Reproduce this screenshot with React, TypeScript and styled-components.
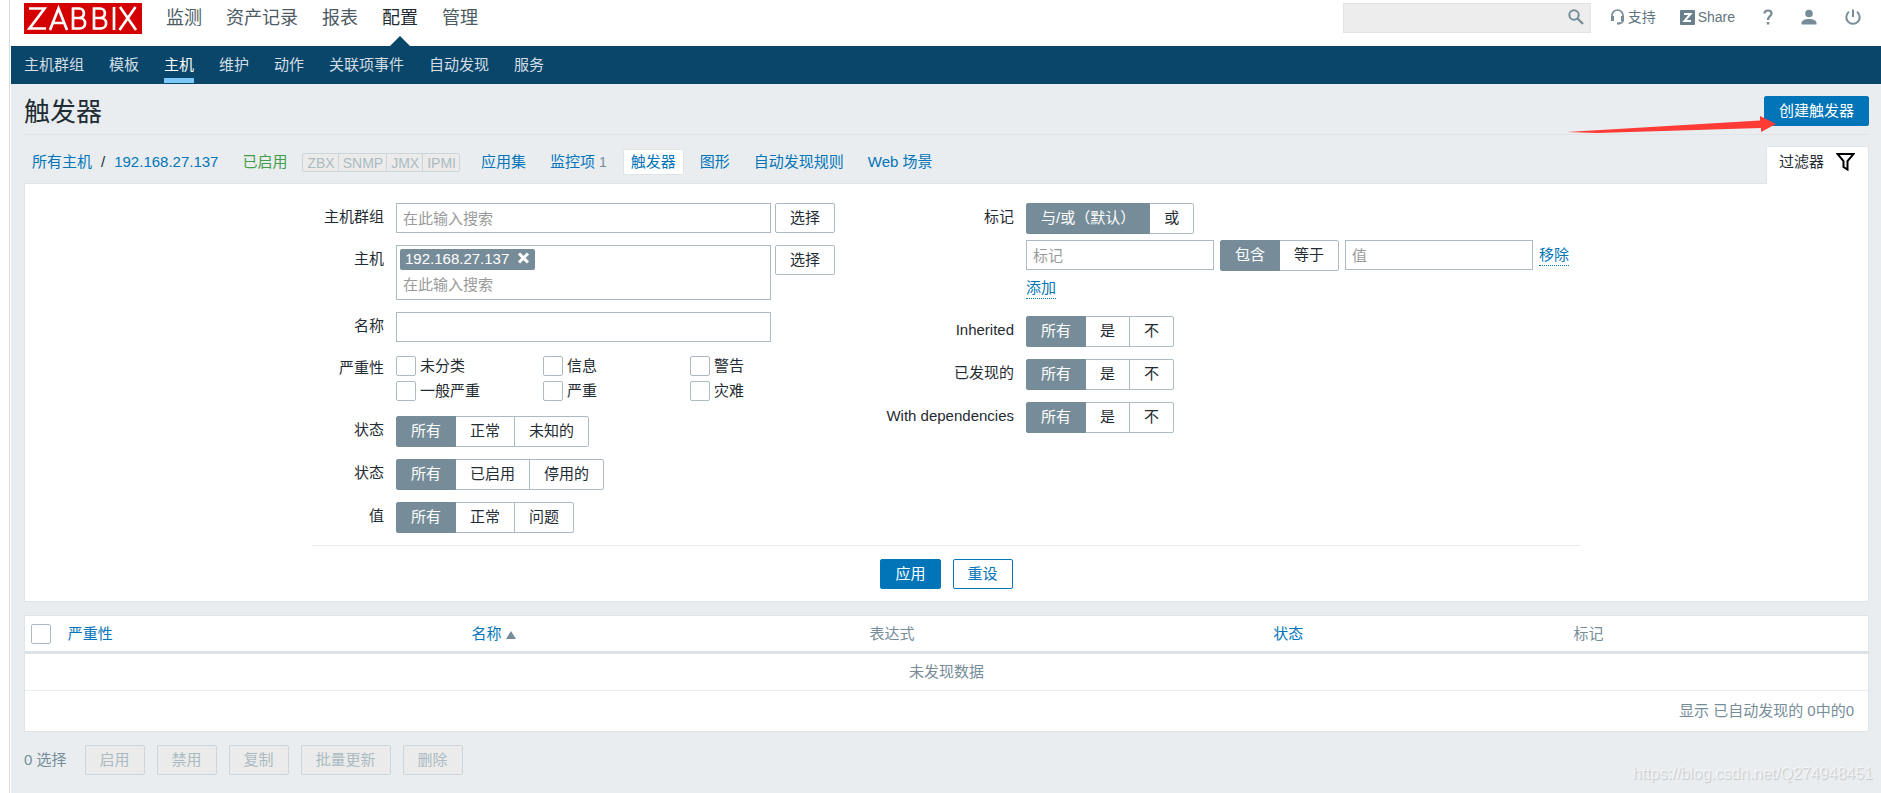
import React from "react";
import styled, { createGlobalStyle, css } from "styled-components";

const Global = createGlobalStyle`
  *, *::before, *::after { box-sizing: border-box; }
  body { margin: 0; background: #fff; }
  body, button, input, table {
    font-family: "Liberation Sans", "Noto Sans CJK SC", sans-serif;
    font-size: 15px;
    line-height: 20px;
    color: #1f2c33;
  }
  a { color: #0275b8; text-decoration: none; }
`;

const Shell = styled.div`
  margin-left: 9px;
  padding-left: 1px;
  border-left: 1px solid #dcdcdc;
`;

const Page = styled.div`
  min-height: 100vh;
  background: #e9edf0;
  position: relative;
  overflow: hidden;
`;

/* Top bar */
const TopBar = styled.header`
  display: flex;
  align-items: flex-start;
  height: 46px;
  padding: 3px 20px 0 13px;
  background: #fff;
`;

const Logo = styled.a`
  flex: none;
  height: 31px;
  svg { display: block; }
`;

const MainNav = styled.nav`
  display: flex;
  gap: 24px;
  margin-left: 24px;
`;

const MainLink = styled.a<{ $active?: boolean }>`
  position: relative;
  height: 43px;
  font-size: 18px;
  line-height: 31px;
  white-space: nowrap;
  color: ${(p) => (p.$active ? "#1f2c33" : "#4c5a63")};
  ${(p) =>
    p.$active &&
    css`
      &::after {
        content: "";
        position: absolute;
        left: 50%;
        bottom: 0;
        margin-left: -10px;
        border: 10px solid transparent;
        border-top-width: 0;
        border-bottom-color: #0a466a;
      }
    `}
`;

const SearchBox = styled.div`
  position: relative;
  margin-left: auto;
  input {
    display: block;
    width: 248px;
    height: 30px;
    padding: 0 34px 0 6px;
    border: 1px solid #dfe4e7;
    background: #ededed;
    outline: 0;
  }
  button {
    position: absolute;
    right: 6px;
    top: 5px;
    padding: 0;
    border: 0;
    background: none;
  }
  svg { display: block; }
`;

const UserNav = styled.nav`
  display: flex;
  align-items: center;
  height: 28px;
  margin-left: 19px;
`;

const UserLink = styled.a<{ $gap: number }>`
  display: flex;
  align-items: center;
  gap: 3px;
  margin-right: ${(p) => p.$gap}px;
  font-size: 14px;
  white-space: nowrap;
  color: #5f7480;
  svg { display: block; }
`;

/* Sub menu */
const SubNav = styled.nav`
  display: flex;
  gap: 25px;
  height: 38px;
  padding: 0 13px;
  background: #0a466a;
`;

const SubLink = styled.a<{ $active?: boolean }>`
  height: 37px;
  line-height: 37px;
  white-space: nowrap;
  color: ${(p) => (p.$active ? "#fff" : "#d3dfe6")};
  border-bottom: 5px solid ${(p) => (p.$active ? "#7cc8f7" : "transparent")};
`;

/* Page heading */
const Content = styled.main`
  padding: 0 12px 18px 13px;
`;

const TitleRow = styled.div`
  display: flex;
  justify-content: space-between;
  align-items: flex-start;
  height: 51px;
  padding-top: 12px;
  border-bottom: 1px solid #dfe4e7;
  h1 {
    margin: 0;
    font-size: 26px;
    line-height: 32px;
    font-weight: 400;
  }
`;

type Kind = "primary" | "outline" | "plain";
const kinds = {
  primary: css`background: #0275b8; border-color: #0275b8; color: #fff;`,
  outline: css`background: #fff; border-color: #0275b8; color: #0275b8;`,
  plain: css`background: #fff; border-color: #acbbc2; color: #1f2c33;`,
};
const Button = styled.button<{ $kind?: Kind }>`
  flex: none;
  height: 30px;
  padding: 0 14px;
  border: 1px solid;
  border-radius: 2px;
  line-height: 26px;
  white-space: nowrap;
  ${(p) => kinds[p.$kind || "plain"]}
  &:disabled {
    background: #ebebeb;
    border-color: #ccd5d9;
    color: #acbbc2;
  }
`;

/* Host tabs */
const HostBar = styled.div`
  display: flex;
  align-items: flex-end;
  justify-content: space-between;
  height: 48px;
`;

const HostNav = styled.div`
  display: flex;
  align-items: center;
  height: 26px;
  margin-bottom: 8px;
  padding-left: 8px;
  white-space: nowrap;
`;

const Slash = styled.span`
  margin: 0 9px;
`;

const HostState = styled.a`
  margin: 0 15px 0 24px;
  color: #429e47;
`;

const Interfaces = styled.div`
  display: flex;
  margin-right: 13px;
  border: 1px solid #ccd5d9;
  border-radius: 2px;
  background: #ebebeb;
  span {
    height: 17px;
    padding: 0 3px 0 4px;
    font-size: 14px;
    line-height: 18px;
    color: #acbbc2;
  }
  span + span { border-left: 1px solid #ccd5d9; }
`;

const HostTab = styled.a<{ $active?: boolean }>`
  height: 26px;
  padding: 0 7px;
  margin-right: 8px;
  line-height: 24px;
  border: 1px solid ${(p) => (p.$active ? "#dfe4e7" : "transparent")};
  border-radius: 2px;
  background: ${(p) => (p.$active ? "#fff" : "transparent")};
  sup {
    margin-left: 4px;
    font-size: 14px;
    line-height: 20px;
    vertical-align: baseline;
    color: #768d99;
  }
`;

const FilterTab = styled.button`
  position: relative;
  z-index: 1;
  display: flex;
  align-items: center;
  gap: 12px;
  height: 38px;
  margin-bottom: -1px;
  padding: 0 13px 8px 12px;
  border: 1px solid #dfe4e7;
  border-bottom: 0;
  border-radius: 2px 2px 0 0;
  background: #fff;
  white-space: nowrap;
`;

/* Filter */
const FilterPanel = styled.form`
  padding: 19px 0 12px;
  border: 1px solid #dfe4e7;
  background: #fff;
`;

const FilterInner = styled.div`
  width: max-content;
  margin: 0 auto;
`;

const FilterColumns = styled.div`
  display: flex;
  gap: 50px;
  padding: 0 12px 12px 0;
  border-bottom: 1px solid #ebebeb;
`;

const FormColumn = styled.div<{ $label: number; $field: number }>`
  display: grid;
  grid-template-columns: ${(p) => p.$label}px ${(p) => p.$field}px;
  column-gap: 12px;
  row-gap: 12px;
  align-content: start;
`;

const FieldLabel = styled.label`
  padding-top: 4px;
  text-align: right;
  white-space: nowrap;
`;

const Field = styled.div`
  display: flex;
  align-items: flex-start;
  gap: 4px;
`;

const TextInput = styled.input<{ $short?: boolean }>`
  flex: none;
  width: ${(p) => (p.$short ? 188 : 375)}px;
  height: 30px;
  padding: 1px 6px 0;
  border: 1px solid #acbbc2;
  outline: 0;
  &::placeholder { color: #9a9a9a; opacity: 1; }
`;

const MultiSelect = styled.div`
  display: flex;
  flex-direction: column;
  align-items: flex-start;
  width: 375px;
  height: 55px;
  padding: 3px;
  border: 1px solid #acbbc2;
  input {
    width: 100%;
    height: 28px;
    padding: 3px 3px 0;
    border: 0;
    outline: 0;
  }
  input::placeholder { color: #9a9a9a; opacity: 1; }
`;

const Token = styled.span`
  display: flex;
  align-items: center;
  gap: 8px;
  height: 22px;
  padding: 0 5px;
  border-radius: 2px;
  background: #768d99;
  color: #fff;
  button {
    padding: 0 0 2px;
    border: 0;
    background: none;
  }
  svg { display: block; }
`;

const CheckGrid = styled.div`
  display: grid;
  grid-template-columns: repeat(3, 147px);
  row-gap: 5px;
  padding: 2px 0 3px;
  label {
    display: flex;
    align-items: center;
    gap: 4px;
    height: 20px;
  }
`;

const Checkbox = styled.input.attrs({ type: "checkbox" })`
  appearance: none;
  flex: none;
  display: block;
  width: 20px;
  height: 20px;
  margin: 0;
  border: 1px solid #acbbc2;
  border-radius: 2px;
  background: #fff;
`;

const SegmentGroup = styled.div`
  display: flex;
  label {
    position: relative;
    height: 31px;
    margin-left: -1px;
    padding: 0 14px;
    border: 1px solid #acbbc2;
    line-height: 27px;
    white-space: nowrap;
  }
  label:first-child { margin-left: 0; border-radius: 2px 0 0 2px; }
  label:last-child { border-radius: 0 2px 2px 0; }
  label:has(input:checked) {
    z-index: 1;
    border-color: #768d99;
    background: #768d99;
    color: #fff;
  }
  input {
    position: absolute;
    opacity: 0;
    margin: 0;
  }
`;

const TagField = styled.div`
  display: flex;
  flex-direction: column;
  align-items: flex-start;
  gap: 6px;
  padding-bottom: 5px;
`;

const TagRow = styled.div`
  display: flex;
  gap: 6px;
`;

const DottedLink = styled.button`
  padding: 0;
  border: 0;
  border-bottom: 1px dotted #0275b8;
  background: none;
  line-height: 21px;
  white-space: nowrap;
  color: #0275b8;
  ${TagRow} & {
    align-self: flex-start;
    margin-top: 4px;
  }
`;

const FilterActions = styled.div`
  display: flex;
  justify-content: center;
  gap: 12px;
  padding-top: 13px;
`;

/* Data table */
const DataTable = styled.table`
  width: 100%;
  margin-top: 13px;
  table-layout: fixed;
  border-collapse: separate;
  border-spacing: 0;
  border: 1px solid #dfe4e7;
  background: #fff;
  color: #768d99;
  th {
    height: 38px;
    padding: 0 6px;
    border-bottom: 3px solid #dce2e5;
    font-weight: 400;
    text-align: left;
  }
  td { height: 37px; padding: 0 6px; }
`;

const EmptyCell = styled.td`
  text-align: center;
  border-bottom: 1px solid #ebeef0;
`;

const TotalCell = styled.td`
  && { height: 40px; padding: 0 14px; }
  text-align: right;
`;

const SortMark = styled.span`
  display: inline-block;
  margin-left: 5px;
  border: 5px solid transparent;
  border-top-width: 0;
  border-bottom: 8px solid #768d99;
`;

const ActionBar = styled.div`
  display: flex;
  align-items: center;
  gap: 12px;
  margin-top: 13px;
  span {
    margin-right: 6px;
    color: #768d99;
  }
`;

const Arrow = styled.svg`
  position: absolute;
  top: 115px;
  right: 104px;
`;

const Watermark = styled.div`
  position: absolute;
  right: 8px;
  bottom: 9px;
  font-size: 16px;
  color: rgba(255, 255, 255, 0.6);
  text-shadow: 1px 1px 1px rgba(0, 0, 0, 0.16);
`;

function Segments({ name, options, label }: { name: string; options: string[]; label: string }) {
  return (
    <SegmentGroup role="radiogroup" aria-label={label}>
      {options.map((o, i) => (
        <label key={o}>
          <input type="radio" name={name} defaultChecked={i === 0} />
          {o}
        </label>
      ))}
    </SegmentGroup>
  );
}

const mainMenu = ["监测", "资产记录", "报表", "配置", "管理"];
const subMenu = ["主机群组", "模板", "主机", "维护", "动作", "关联项事件", "自动发现", "服务"];
const severities = ["未分类", "信息", "警告", "一般严重", "严重", "灾难"];
const massActions = ["启用", "禁用", "复制", "批量更新", "删除"];

export default function App() {
  return (
    <Shell>
      <Global />
      <Page>
        <TopBar>
          <Logo href="#" aria-label="ZABBIX">
            <svg width="118" height="31" viewBox="0 0 118 31">
              <rect width="118" height="31" fill="#d40000" />
              <g fill="none" stroke="#fff" strokeWidth="2.700">
                <path d="M5 5.500H20.500L5.500 25.500H22" />
                <path d="M26 27L34.500 5.500L43 27M29 20H40" />
                <path d="M49 5.500V25.500H55.500C63 25.500 63 15 55.500 15H49M55 15C61.500 15 61.500 5.500 55 5.500H47.700" />
                <path d="M70 5.500V25.500H76.500C84 25.500 84 15 76.500 15H70M76 15C82.500 15 82.500 5.500 76 5.500H68.700" />
                <path d="M90 4V27" />
                <path d="M96 4L112 27M111.500 4L95.500 27" />
              </g>
            </svg>
          </Logo>
          <MainNav>
            {mainMenu.map((m) => (
              <MainLink key={m} href="#" $active={m === "配置"}>{m}</MainLink>
            ))}
          </MainNav>
          <SearchBox>
            <input type="text" aria-label="搜索" />
            <button type="button" aria-label="搜索">
              <svg width="18" height="18" viewBox="0 0 18 18" fill="none" stroke="#768d99">
                <circle cx="7" cy="7" r="4.700" strokeWidth="2" />
                <path d="M10.500 10.500L16 16" strokeWidth="2.300" />
              </svg>
            </button>
          </SearchBox>
          <UserNav>
            <UserLink href="#" $gap={24}>
              <svg width="15" height="16" viewBox="0 0 15 16" fill="none" stroke="#768d99" strokeWidth="2">
                <path d="M2 8V6.500A5.500 5.500 0 0 1 13 6.500V11C13 13.500 11 14.500 8 14.500" strokeWidth="1.700" />
                <path d="M2.500 7V12M12.500 7V12" strokeWidth="3" />
                <path d="M7 14.500H10" />
              </svg>
              支持
            </UserLink>
            <UserLink href="#" $gap={28}>
              <svg width="15" height="15" viewBox="0 0 15 15">
                <rect width="15" height="15" rx="1" fill="#6a808c" />
                <path d="M4 4H10.500L4.500 11H11" fill="none" stroke="#fff" strokeWidth="2" />
              </svg>
              Share
            </UserLink>
            <UserLink href="#" $gap={28} aria-label="帮助">
              <svg width="10" height="16" viewBox="0 0 10 16" fill="none" stroke="#768d99" strokeWidth="2.200">
                <path d="M1.500 4.500C1.500 0.500 8.500 0.500 8.500 4.500C8.500 7 5 7.500 5 11" />
                <path d="M5 13V15.500" strokeWidth="2.500" />
              </svg>
            </UserLink>
            <UserLink href="#" $gap={28} aria-label="用户">
              <svg width="16" height="16" viewBox="0 0 16 16" fill="#768d99">
                <circle cx="8" cy="4.500" r="3.800" />
                <path d="M0.500 15.500V14C0.500 11.500 4 10 8 10S15.500 11.500 15.500 14V15.500Z" />
              </svg>
            </UserLink>
            <UserLink href="#" $gap={0} aria-label="退出">
              <svg width="16" height="16" viewBox="0 0 16 16" fill="none" stroke="#768d99" strokeWidth="2">
                <path d="M4 2.800A6.700 6.700 0 1 0 12 2.800M8 0.500V8" />
              </svg>
            </UserLink>
          </UserNav>
        </TopBar>
        <SubNav>
          {subMenu.map((m) => (
            <SubLink key={m} href="#" $active={m === "主机"}>{m}</SubLink>
          ))}
        </SubNav>

        <Content>
          <TitleRow>
            <h1>触发器</h1>
            <Button $kind="primary">创建触发器</Button>
          </TitleRow>

          <HostBar>
            <HostNav>
              <a href="#">所有主机</a>
              <Slash>/</Slash>
              <a href="#">192.168.27.137</a>
              <HostState href="#">已启用</HostState>
              <Interfaces>
                <span>ZBX</span>
                <span>SNMP</span>
                <span>JMX</span>
                <span>IPMI</span>
              </Interfaces>
              <HostTab href="#">应用集</HostTab>
              <HostTab href="#">监控项<sup>1</sup></HostTab>
              <HostTab href="#" $active>触发器</HostTab>
              <HostTab href="#">图形</HostTab>
              <HostTab href="#">自动发现规则</HostTab>
              <HostTab href="#">Web 场景</HostTab>
            </HostNav>
            <FilterTab type="button">
              过滤器
              <svg width="19" height="19" viewBox="0 0 19 19" fill="none" stroke="#000" strokeWidth="2">
                <path d="M1.500 2H17.500L11.500 9V17.500L7.500 15V9Z" />
              </svg>
            </FilterTab>
          </HostBar>

          <FilterPanel onSubmit={(e) => e.preventDefault()}>
            <FilterInner>
              <FilterColumns>
                <FormColumn $label={72} $field={440}>
                  <FieldLabel htmlFor="groups">主机群组</FieldLabel>
                  <Field>
                    <TextInput id="groups" placeholder="在此输入搜索" />
                    <Button type="button">选择</Button>
                  </Field>
                  <FieldLabel htmlFor="hosts">主机</FieldLabel>
                  <Field>
                    <MultiSelect>
                      <Token>
                        192.168.27.137
                        <button type="button" aria-label="移除 192.168.27.137">
                          <svg width="13" height="12" viewBox="0 0 13 12" stroke="#fff" strokeWidth="3">
                            <path d="M2 1.500L11 10.500M11 1.500L2 10.500" />
                          </svg>
                        </button>
                      </Token>
                      <input id="hosts" placeholder="在此输入搜索" />
                    </MultiSelect>
                    <Button type="button">选择</Button>
                  </Field>
                  <FieldLabel htmlFor="name">名称</FieldLabel>
                  <TextInput id="name" />
                  <FieldLabel as="span">严重性</FieldLabel>
                  <CheckGrid>
                    {severities.map((s) => (
                      <label key={s}><Checkbox />{s}</label>
                    ))}
                  </CheckGrid>
                  <FieldLabel as="span">状态</FieldLabel>
                  <Segments name="state" label="状态" options={["所有", "正常", "未知的"]} />
                  <FieldLabel as="span">状态</FieldLabel>
                  <Segments name="status" label="状态" options={["所有", "已启用", "停用的"]} />
                  <FieldLabel as="span">值</FieldLabel>
                  <Segments name="value" label="值" options={["所有", "正常", "问题"]} />
                </FormColumn>

                <FormColumn $label={128} $field={543}>
                  <FieldLabel as="span">标记</FieldLabel>
                  <TagField>
                    <Segments name="evaltype" label="标记" options={["与/或（默认）", "或"]} />
                    <TagRow>
                      <TextInput $short placeholder="标记" aria-label="标记" />
                      <Segments name="operator" label="运算符" options={["包含", "等于"]} />
                      <TextInput $short placeholder="值" aria-label="值" />
                      <DottedLink type="button">移除</DottedLink>
                    </TagRow>
                    <DottedLink type="button">添加</DottedLink>
                  </TagField>
                  <FieldLabel as="span">Inherited</FieldLabel>
                  <Segments name="inherited" label="Inherited" options={["所有", "是", "不"]} />
                  <FieldLabel as="span">已发现的</FieldLabel>
                  <Segments name="discovered" label="已发现的" options={["所有", "是", "不"]} />
                  <FieldLabel as="span">With dependencies</FieldLabel>
                  <Segments name="dependencies" label="With dependencies" options={["所有", "是", "不"]} />
                </FormColumn>
              </FilterColumns>
              <FilterActions>
                <Button type="submit" $kind="primary">应用</Button>
                <Button type="reset" $kind="outline">重设</Button>
              </FilterActions>
            </FilterInner>
          </FilterPanel>

          <DataTable>
            <colgroup>
              <col style={{ width: "2%" }} />
              <col style={{ width: "21.9%" }} />
              <col style={{ width: "21.6%" }} />
              <col style={{ width: "21.9%" }} />
              <col style={{ width: "16.3%" }} />
              <col />
            </colgroup>
            <thead>
              <tr>
                <th><Checkbox aria-label="全选" /></th>
                <th><a href="#">严重性</a></th>
                <th><a href="#">名称<SortMark /></a></th>
                <th>表达式</th>
                <th><a href="#">状态</a></th>
                <th>标记</th>
              </tr>
            </thead>
            <tbody>
              <tr><EmptyCell colSpan={6}>未发现数据</EmptyCell></tr>
              <tr><TotalCell colSpan={6}>显示 已自动发现的 0中的0</TotalCell></tr>
            </tbody>
          </DataTable>

          <ActionBar>
            <span>0 选择</span>
            {massActions.map((a) => (
              <Button key={a} type="button" disabled>{a}</Button>
            ))}
          </ActionBar>
        </Content>

        <Arrow width="210" height="18" viewBox="0 0 210 18" fill="#ff3b36">
          <path d="M0 17L193 5.500V1L209 9L194 17V13L30 18Z" />
        </Arrow>
        <Watermark>https://blog.csdn.net/Q274948451</Watermark>
      </Page>
    </Shell>
  );
}
